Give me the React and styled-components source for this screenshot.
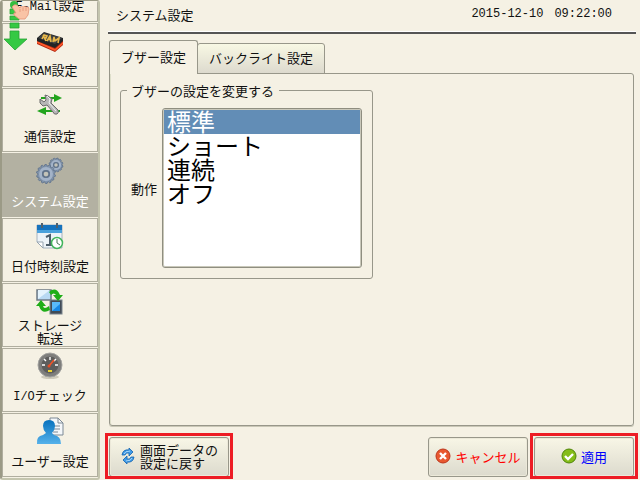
import React, { useState } from "react";
import styled, { createGlobalStyle, css } from "styled-components";

const Global = createGlobalStyle`
  * { box-sizing: border-box; }
  body {
    margin: 0;
    background: #f5f1e4;
    color: #111;
    font-family: "Noto Sans CJK JP", sans-serif;
    font-size: 13px;
    line-height: 13px;
  }
  button, select { font: inherit; color: inherit; }
`;

const Page = styled.div`
  display: grid;
  grid-template-columns: 100px minmax(0, 1fr);
  height: 100vh;
  min-height: 400px;
`;

const Sidebar = styled.nav`
  position: relative;
  display: flex;
  flex-direction: column;
  justify-content: flex-end;
  gap: 1px;
  overflow: hidden;
  padding-bottom: 1px;
  border: solid #9b9a86;
  border-width: 1px 2px 2px;
  border-right-color: #c4c5ae;
  border-bottom-color: #c4c5ae;
  border-radius: 3px;
`;

const NavItem = styled.button`
  flex: none;
  display: flex;
  flex-direction: column;
  align-items: center;
  height: 64px;
  padding: 3px 0 0;
  border: 1px solid ${(p) => (p.$active ? "#b3b1a2" : "#b0ae9f")};
  background: ${(p) => (p.$active ? "#b3b1a2" : "#f5f1e4")};
  color: ${(p) => (p.$active ? "#fff" : "#111")};
`;

const NavIcon = styled.svg`
  flex: none;
  width: 28px;
  height: 28px;
`;

const NavLabel = styled.span`
  flex: 1;
  display: flex;
  flex-direction: column;
  justify-content: center;
  text-align: center;
  white-space: nowrap;
`;

const Mono = styled.span`
  font-family: "Liberation Mono", monospace;
  font-size: 12px;
`;

const ScrollHint = styled.svg`
  position: absolute;
  left: 0;
  top: 0;
  width: 28px;
  height: 52px;
  pointer-events: none;
`;

const Main = styled.main`
  display: flex;
  flex-direction: column;
  min-width: 0;
  padding: 0 4px 3px 8px;
`;

const Header = styled.header`
  display: flex;
  align-items: center;
  justify-content: space-between;
  height: 34px;
  padding: 0 24px 4px 8px;
  border-bottom: 2px solid #555;
  box-shadow: inset 0 -1px #fff;
`;

const Title = styled.h1`
  margin: 0;
  font-size: 13px;
  font-weight: 400;
`;

const Clock = styled.time`
  display: flex;
  gap: 11px;
`;

const TabArea = styled.section`
  flex: 1;
  display: flex;
  flex-direction: column;
  padding: 6px 2px 0 1px;
`;

const TabList = styled.div`
  display: flex;
  align-items: flex-end;
  height: 34px;
`;

const Tab = styled.button`
  position: relative;
  padding: 0 11px 2px;
  border: 1px solid #98978a;
  border-radius: 3px 3px 0 0;
  ${(p) =>
    p.$active
      ? css`
          z-index: 1;
          height: 34px;
          border-bottom: 0;
          background: #f5f1e4;
        `
      : css`
          height: 31px;
          margin-left: -1px;
          background: linear-gradient(#f8f8e4, #dddace);
        `}
`;

const Panel = styled.div`
  flex: 1;
  margin-top: -1px;
  padding: 10px;
  border: 1px solid #98978a;
  border-radius: 0 3px 3px 3px;
  box-shadow: 0 1px #c9c7b6, inset 1px 0 #dedfca;
`;

const Group = styled.fieldset`
  width: fit-content;
  margin: 0;
  padding: 11px 10px 10px;
  border: 1px solid #98978a;
  border-radius: 3px;
`;

const Legend = styled.legend`
  margin-left: -4px;
  padding: 0 5px 0 4px;
`;

const Field = styled.div`
  display: flex;
  align-items: center;
  gap: 5px;
`;

const ListBox = styled.select`
  width: 200px;
  height: 160px;
  padding: 1px;
  border: 1px solid #8f8e80;
  border-radius: 3px;
  outline: 0;
  background: #fff;
  box-shadow: inset 0 0 0 1px #c9c8ba;
  color: #000;
  font-size: 24px;
  line-height: 24px;
  overflow: hidden;
  scrollbar-width: none;
`;

const Choice = styled.option`
  display: flex;
  align-items: center;
  height: 24px;
  min-height: 24px;
  padding: 0 3px 4px;
  line-height: 24px;
  &:checked {
    background: #628db6 linear-gradient(#628db6, #628db6);
    color: #fff;
    -webkit-text-fill-color: #fff;
  }
`;

const Footer = styled.footer`
  display: flex;
  gap: 6px;
  padding: 11px 2px 0 1px;
`;

const Action = styled.button`
  position: relative;
  display: flex;
  align-items: center;
  justify-content: center;
  gap: 4px;
  width: ${(p) => (p.$wide ? "120px" : "100px")};
  height: 40px;
  padding: 0 0 2px;
  border: 1px solid #98978a;
  border-radius: 3px;
  background: linear-gradient(#f8f6e6, #dcdacd);
  box-shadow: inset 0 0 0 1px #ece9d9;
  color: ${(p) => p.$color || "#111"};
  text-align: left;
  ${(p) => p.$wide && "margin-right: auto;"}
  ${(p) =>
    p.$marked &&
    css`
      &::after {
        content: "";
        position: absolute;
        inset: -5px -5px -3px;
        border: 3px solid #ed1c24;
        pointer-events: none;
      }
    `}
`;

const ActionIcon = styled.svg`
  flex: none;
  width: 16px;
  height: 16px;
`;

const Lines = styled.span`
  display: flex;
  flex-direction: column;
`;

function gearPath(n, outer, inner) {
  const points = [];
  for (let i = 0; i < n; i += 1) {
    [[0.05, inner], [0.25, outer], [0.6, outer], [0.8, inner]].forEach(([step, r]) => {
      const a = ((i + step) * 2 * Math.PI) / n;
      points.push(`${(r * Math.cos(a)).toFixed(2)} ${(r * Math.sin(a)).toFixed(2)}`);
    });
  }
  return `M${points.join("L")}Z`;
}

function Gear({ x, y, r, n }) {
  return (
    <g transform={`translate(${x} ${y})`}>
      <path d={gearPath(n, r, r * 0.86)} fill="#8093ab" stroke="#66788f" strokeWidth="1" />
      <circle r={r * 0.58} fill="none" stroke="#a3b3c8" strokeWidth={r * 0.3} />
      <circle r={r * 0.34} fill="#c3c3b8" stroke="#61738a" strokeWidth={r * 0.18} />
    </g>
  );
}

const icons = {
  mail: (
    <>
      <rect x="4" y="7" width="20" height="14" fill="#e9f0f7" stroke="#8294a5" />
      <path d="M4 7l10 8 10-8" fill="none" stroke="#8294a5" />
    </>
  ),
  sram: (
    <>
      <path d="M1 12v5l18 8 8-7v-5l-8 7z" fill="#b3260f" />
      <path d="M1 14l18 8 8-7v2l-8 7-18-8z" fill="#ff5a2c" />
      <path d="M1 11l7-6 19 6v3l-8 7-18-7z" fill="#222426" />
      <path d="M2 11l6-5 18 5-7 6z" fill="#3f4243" />
      <path d="M6 12l2-4 3 1-1 2-2-1 2 4M11 14l3-5 1 6M12 12l3 1M17 15l1-5 1 4 4-3-1 5" fill="none" stroke="#e8b84b" strokeWidth="1.6" />
    </>
  ),
  link: (
    <>
      <path d="M5 5h13V2l8 4-8 4V7H5z" fill="#23a51e" />
      <path d="M24 20H10v3l-9-4 9-4v3h14z" fill="#23a51e" />
      <path d="M9 3l3 1 4 3-1 4 7 7q1 3-1 4-3 1-4-2l-6-7-4 1-3-3v-4l4 3 2-2z" fill="#b7b7b7" stroke="#6b6b6b" />
      <path d="M11 4l3 3-1 4 7 8" fill="none" stroke="#f1f1f1" />
    </>
  ),
  gears: (
    <>
      <Gear x={20} y={8} r={7} n={12} />
      <Gear x={10} y={17} r={9.5} n={14} />
    </>
  ),
  calendar: (
    <>
      <path d="M1 3h25v23H7l-6-6z" fill="#edf3f8" stroke="#a5b3bf" />
      <path d="M1 3h25v8H1z" fill="#1673bd" />
      <path d="M1 8h25v3H1z" fill="#4aa1dc" />
      <path d="M6 1v5M21 1v5" stroke="#52616c" strokeWidth="2" />
      <path d="M1 20h6v6z" fill="#fff" stroke="#95a3af" />
      <path d="M10 15l4-2v10M10 23h7" fill="none" stroke="#4d5d6a" strokeWidth="2" />
      <circle cx="21" cy="21" r="5.5" fill="#fff" stroke="#42b65b" strokeWidth="1.5" />
      <path d="M21 17v4l3 2" fill="none" stroke="#477455" />
    </>
  ),
  storage: (
    <>
      <rect x="1" y="3" width="14" height="10" fill="#b8d9f3" stroke="#6d7984" strokeWidth="1.5" />
      <path d="M2 12l12-9H2z" fill="#e4f3fd" />
      <rect x="14" y="13" width="12" height="14" fill="#414b56" stroke="#79838c" />
      <rect x="16" y="15" width="8" height="9" fill="#1587e5" />
      <path d="M16 24l8-7v-2h-8z" fill="#59bafa" />
      <path d="M13 5q7-6 11 3h3l-5 6-5-6h3q-2-3-5 0z" fill="#20ae18" />
      <path d="M14 23q-8 5-11-4H0l5-6 5 6H7q1 4 6 0z" fill="#20ae18" />
    </>
  ),
  gauge: (
    <>
      <ellipse cx="14" cy="25" rx="9" ry="2" fill="#cfcbbb" />
      <circle cx="14" cy="13" r="12" fill="#7e7e7c" stroke="#a3a3a0" />
      <circle cx="14" cy="13" r="8.5" fill="#5d5d5c" />
      <path d="M6 13h3M8 7l2 2M14 5v3M20 7l-2 2M19 13h3" stroke="#fff" strokeWidth="1.4" />
      <path d="M13 14l5-6" stroke="#f35327" strokeWidth="1.6" />
      <circle cx="13" cy="14" r="1.5" fill="#e64c24" />
      <path d="M12 19h4" stroke="#eed62e" strokeWidth="2" />
    </>
  ),
  user: (
    <>
      <defs>
        <linearGradient id="person" x1="0" y1="0" x2="0" y2="1">
          <stop offset="0" stopColor="#0872be" />
          <stop offset="1" stopColor="#55b1ea" />
        </linearGradient>
      </defs>
      <path d="M14 1h8l5 5v12H14z" fill="#f4f7fa" stroke="#7c8995" />
      <path d="M22 1v5h5M17 9h7M17 12h7M17 15h5" fill="none" stroke="#7c8995" />
      <path d="M1 27q-1-8 6-9l3-2q-3-3-3-7 0-6 6-6t6 6q0 4-3 7l2 2q7 1 7 9z" fill="url(#person)" />
    </>
  ),
};

const items = [
  { id: "mail", latin: "E-Mail", text: "設定" },
  { id: "sram", latin: "SRAM", text: "設定" },
  { id: "link", text: "通信設定" },
  { id: "gears", text: "システム設定" },
  { id: "calendar", text: "日付時刻設定" },
  { id: "storage", text: "ストレージ", second: "転送" },
  { id: "gauge", latin: "I/O", text: "チェック" },
  { id: "user", text: "ユーザー設定" },
];

function SwipeArrow() {
  return (
    <ScrollHint viewBox="0 0 28 52" aria-hidden="true">
      <path d="M8 8h9v5H8zM8 15h9v4H8zM8 22h9v5H8zM8 30h9v8h8L13 49 2 38h6z" fill="#35c943" stroke="#2aa236" strokeWidth=".8" />
      <circle cx="12" cy="4" r="4" fill="#35bd40" />
      <path d="M12 4q2-1 4 1l2 2V6q2-1 3 0 2-1 3 0 3-1 3 2l-1 6-3 4h-6l-5-4q-1-3 2-2l-4-6z" fill="#f9c3a5" stroke="#e39377" strokeWidth=".8" />
      <path d="M18 8v3M21 7v3M24 7v3" fill="none" stroke="#e39377" strokeWidth=".8" />
    </ScrollHint>
  );
}

const RestoreIcon = () => (
  <ActionIcon viewBox="0 0 16 16" aria-hidden="true">
    <path d="M2 7Q3 1 9 2V0l4 4-4 4V5Q6 4 5 7z" fill="#3f9be8" stroke="#1262ad" strokeWidth=".8" />
    <path d="M14 9q-1 6-7 5v2l-4-4 4-4v3q3 1 4-2z" fill="#3f9be8" stroke="#1262ad" strokeWidth=".8" />
    <path d="M4 6q1-3 6-3M12 10q-1 3-6 3" fill="none" stroke="#a4d6fb" />
  </ActionIcon>
);

const CancelIcon = () => (
  <ActionIcon viewBox="0 0 16 16" aria-hidden="true">
    <circle cx="8" cy="8" r="7" fill="#e8582f" stroke="#bd351b" />
    <path d="M5 5l6 6M11 5l-6 6" stroke="#fff" strokeWidth="2.4" />
  </ActionIcon>
);

const ApplyIcon = () => (
  <ActionIcon viewBox="0 0 16 16" aria-hidden="true">
    <circle cx="8" cy="8" r="7" fill="#85bd18" stroke="#4f8508" />
    <path d="M4 8l3 3 5-5" fill="none" stroke="#fff" strokeWidth="2.4" />
  </ActionIcon>
);

export default function App() {
  const [mode, setMode] = useState("標準");
  return (
    <>
      <Global />
      <Page>
        <Sidebar>
          {items.map((item) => (
            <NavItem key={item.id} type="button" $active={item.id === "gears"}>
              <NavIcon viewBox="0 0 28 28" aria-hidden="true">{icons[item.id]}</NavIcon>
              <NavLabel>
                <span>
                  {item.latin && <Mono>{item.latin}</Mono>}
                  {item.text}
                </span>
                {item.second && <span>{item.second}</span>}
              </NavLabel>
            </NavItem>
          ))}
          <SwipeArrow />
        </Sidebar>
        <Main>
          <Header>
            <Title>システム設定</Title>
            <Clock dateTime="2015-12-10T09:22:00">
              <Mono>2015-12-10</Mono>
              <Mono>09:22:00</Mono>
            </Clock>
          </Header>
          <TabArea>
            <TabList role="tablist">
              <Tab type="button" role="tab" aria-selected="true" $active>ブザー設定</Tab>
              <Tab type="button" role="tab" aria-selected="false">バックライト設定</Tab>
            </TabList>
            <Panel role="tabpanel">
              <Group>
                <Legend>ブザーの設定を変更する</Legend>
                <Field>
                  <label htmlFor="mode">動作</label>
                  <ListBox id="mode" size={6} value={mode} onChange={(e) => setMode(e.target.value)}>
                    {["標準", "ショート", "連続", "オフ"].map((name) => (
                      <Choice key={name} value={name}>{name}</Choice>
                    ))}
                  </ListBox>
                </Field>
              </Group>
            </Panel>
          </TabArea>
          <Footer>
            <Action type="button" $wide $marked>
              <RestoreIcon />
              <Lines>
                <span>画面データの</span>
                <span>設定に戻す</span>
              </Lines>
            </Action>
            <Action type="button" $color="#f00">
              <CancelIcon />
              キャンセル
            </Action>
            <Action type="button" $color="#00f" $marked>
              <ApplyIcon />
              適用
            </Action>
          </Footer>
        </Main>
      </Page>
    </>
  );
}
